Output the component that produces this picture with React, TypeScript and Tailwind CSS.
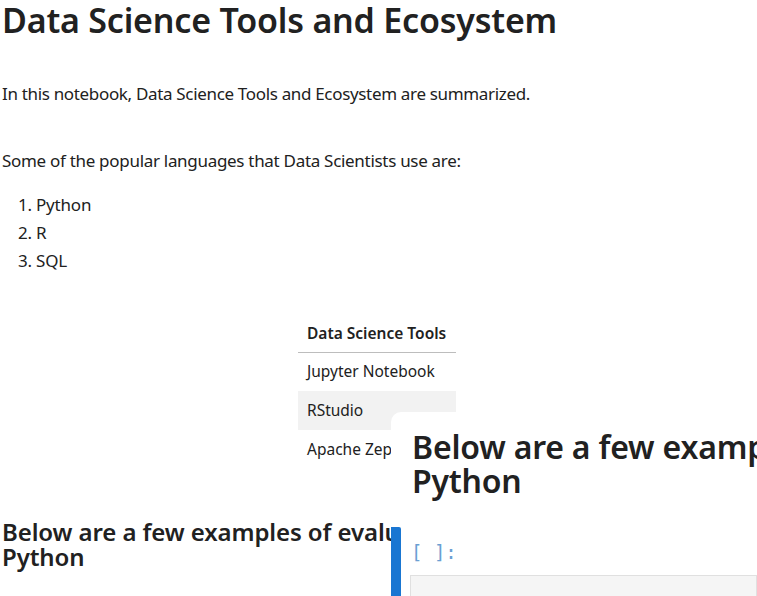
export default function App() {
  return (
    <div className="relative w-[757px] h-[596px] overflow-hidden bg-white text-[#212121] font-['Noto_Sans',sans-serif]">
      <div className="pl-[2px]">
        <h1 className="text-[34px] font-semibold leading-[40px] pt-0 tracking-[-0.2px]">Data Science Tools and Ecosystem</h1>
        <p className="mt-[42px] text-[17px] leading-[24px] tracking-[-0.33px]">In this notebook, Data Science Tools and Ecosystem are summarized.</p>
        <p className="mt-[43px] text-[17px] leading-[24px] tracking-[-0.3px]">Some of the popular languages that Data Scientists use are:</p>
        <ol className="mt-[18px] list-decimal pl-[34px] text-[17px] leading-[28px] tracking-[-0.2px]">
          <li>Python</li>
          <li>R</li>
          <li>SQL</li>
        </ol>
        <table className="ml-[296px] mt-[40px] w-[158px] border-collapse text-[15.5px]">
          <thead>
            <tr className="border-b border-[#bdbdbd]">
              <th className="text-left font-semibold px-[9px] h-[37px] whitespace-nowrap">Data Science Tools</th>
            </tr>
          </thead>
          <tbody>
            <tr><td className="px-[9px] h-[39px] whitespace-nowrap">Jupyter Notebook</td></tr>
            <tr className="bg-[#f2f2f2]"><td className="px-[9px] h-[39px]">RStudio</td></tr>
            <tr><td className="px-[9px] h-[39px] whitespace-nowrap">Apache Zeppelin</td></tr>
          </tbody>
        </table>
        <h2 className="mt-[50px] text-[24px] font-semibold leading-[25px] tracking-[-0.1px] whitespace-nowrap">Below are a few examples of evaluating expressions in<br />Python</h2>
      </div>

      <div className="absolute left-[391px] top-[412px] right-0 bottom-0 bg-white rounded-tl-[10px] flex flex-col">
        <h2 className="pl-[21px] pt-[18px] text-[32px] font-semibold leading-[34px] tracking-[-0.2px] whitespace-nowrap">Below are a few examples of evaluating expressions in<br />Python</h2>
        <div className="mt-[29px] flex flex-1">
          <div className="w-[10px] bg-[#1976d2] rounded-tr-[2px]" />
          <div className="flex-1 pl-[9px]">
            <div className="pt-[15px] pl-[1px] font-['DejaVu_Sans_Mono',monospace] text-[19px] leading-[20px] text-[#6b9fd3]">[ ]:</div>
            <div className="mt-[13px] h-[40px] bg-[#f5f5f5] border border-[#e0e0e0]" />
          </div>
        </div>
      </div>
    </div>
  );
}
